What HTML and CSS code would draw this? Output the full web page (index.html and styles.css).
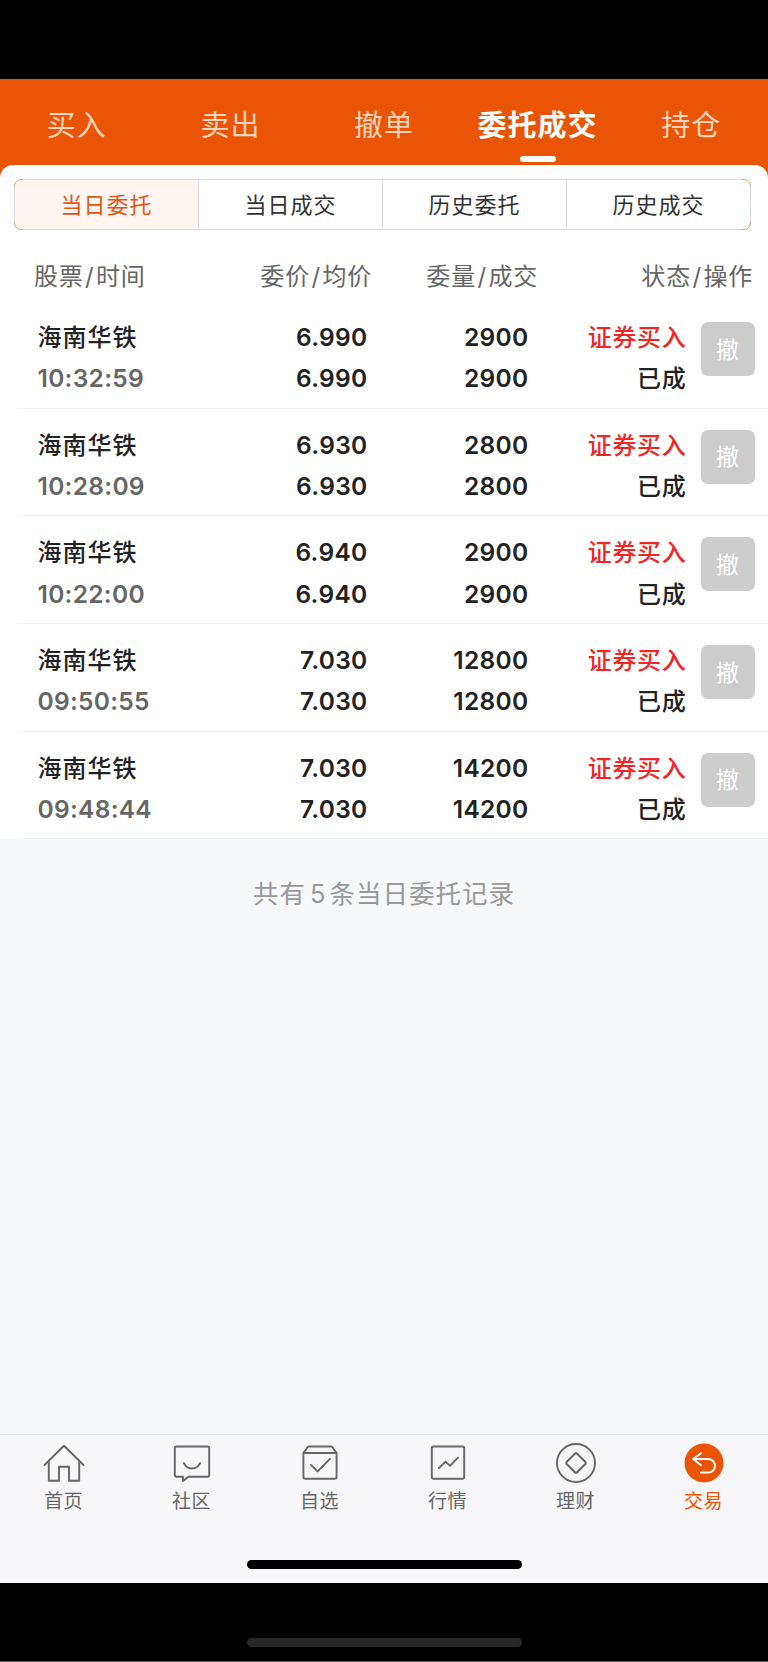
FILE: index.html
```
<!DOCTYPE html>
<html lang="zh-CN">
<head>
    <meta charset="UTF-8">
    <meta name="viewport" content="width=device-width, initial-scale=1.0">
    <title>委托成交</title>
    <link rel="stylesheet" href="styles.css">
</head>
<body>

    <header class="top-nav">
        <a class="top-link">买入</a>
        <a class="top-link">卖出</a>
        <a class="top-link">撤单</a>
        <a class="top-link active">委托成交</a>
        <a class="top-link">持仓</a>
    </header>

    <main class="content">
        <section class="sheet">
            <div class="tabs">
                <button class="tab selected">当日委托</button>
                <button class="tab">当日成交</button>
                <button class="tab">历史委托</button>
                <button class="tab">历史成交</button>
            </div>

            <div class="list-head">
                <span>股票<i>/</i>时间</span>
                <span>委价<i>/</i>均价</span>
                <span>委量<i>/</i>成交</span>
                <span>状态<i>/</i>操作</span>
            </div>

            <div class="row">
                <div class="stock"><p>海南华铁</p><p class="time">10:32:59</p></div>
                <div class="num"><p>6.990</p><p>6.990</p></div>
                <div class="num"><p>2900</p><p>2900</p></div>
                <div class="status"><p class="buy">证券买入</p><p>已成</p></div>
                <button class="cancel">撤</button>
            </div>
            <div class="row">
                <div class="stock"><p>海南华铁</p><p class="time">10:28:09</p></div>
                <div class="num"><p>6.930</p><p>6.930</p></div>
                <div class="num"><p>2800</p><p>2800</p></div>
                <div class="status"><p class="buy">证券买入</p><p>已成</p></div>
                <button class="cancel">撤</button>
            </div>
            <div class="row">
                <div class="stock"><p>海南华铁</p><p class="time">10:22:00</p></div>
                <div class="num"><p>6.940</p><p>6.940</p></div>
                <div class="num"><p>2900</p><p>2900</p></div>
                <div class="status"><p class="buy">证券买入</p><p>已成</p></div>
                <button class="cancel">撤</button>
            </div>
            <div class="row">
                <div class="stock"><p>海南华铁</p><p class="time">09:50:55</p></div>
                <div class="num"><p>7.030</p><p>7.030</p></div>
                <div class="num"><p>12800</p><p>12800</p></div>
                <div class="status"><p class="buy">证券买入</p><p>已成</p></div>
                <button class="cancel">撤</button>
            </div>
            <div class="row">
                <div class="stock"><p>海南华铁</p><p class="time">09:48:44</p></div>
                <div class="num"><p>7.030</p><p>7.030</p></div>
                <div class="num"><p>14200</p><p>14200</p></div>
                <div class="status"><p class="buy">证券买入</p><p>已成</p></div>
                <button class="cancel">撤</button>
            </div>
        </section>

        <p class="summary">共有<span class="count">5</span>条当日委托记录</p>
    </main>

    <nav class="bottom-nav">
        <a class="nav-item">
            <svg class="icon" viewBox="0 0 42 42">
                <path d="M1.5 22 21 2.8 40.5 22M5.8 18.5V37.8H16V23.8H26V37.8H36.2V18.5"/>
            </svg>
            <span>首页</span>
        </a>
        <a class="nav-item">
            <svg class="icon" viewBox="0 0 42 42">
                <path d="M5.5 3.5H36.5Q38.2 3.5 38.2 5.2V32Q38.2 33.7 36.5 33.7H17.5L12 38V33.7H5.5Q3.8 33.7 3.8 32V5.2Q3.8 3.5 5.5 3.5Z"/>
                <path d="M13 20.2C16 27.2 26 27.2 29 20.2"/>
            </svg>
            <span>社区</span>
        </a>
        <a class="nav-item">
            <svg class="icon" viewBox="0 0 42 42">
                <path d="M4.4 10 9.2 3.5H32.8L37.6 10V33.8Q37.6 35.8 35.6 35.8H6.4Q4.4 35.8 4.4 33.8ZM4.4 10H37.6"/>
                <path d="M12 21.8 18.6 28.4 30.8 16"/>
            </svg>
            <span>自选</span>
        </a>
        <a class="nav-item">
            <svg class="icon" viewBox="0 0 42 42">
                <rect x="4.8" y="3.5" width="32.4" height="32.3" rx="1.8"/>
                <path d="M11.8 25.2 18.6 18.6 23 22.8 31 14.6"/>
            </svg>
            <span>行情</span>
        </a>
        <a class="nav-item">
            <svg class="icon" viewBox="0 0 42 42">
                <circle cx="21" cy="20" r="19"/>
                <path d="M21.9 10.5 30.4 19Q31.3 20 30.4 21L21.9 29.5Q21 30.4 20.1 29.5L11.6 21Q10.7 20 11.6 19L20.1 10.5Q21 9.6 21.9 10.5Z"/>
            </svg>
            <span>理财</span>
        </a>
        <a class="nav-item current">
            <svg class="icon" viewBox="0 0 42 42">
                <circle class="disc" cx="21" cy="20" r="19.5"/>
                <path class="arrow" d="M18 10.2 10.2 16 18 22.2M10.2 16H25.2A6.8 6.8 0 0 1 25.2 29.6H18"/>
            </svg>
            <span>交易</span>
        </a>
    </nav>

    <div class="home-area">
        <div class="home-bar"></div>
    </div>
    <footer class="device-area">
        <div class="home-bar"></div>
    </footer>

</body>
</html>
```
FILE: styles.css
```
* {
    margin: 0;
    padding: 0;
    box-sizing: border-box;
}

body {
    display: flex;
    flex-direction: column;
    height: 1662px;
    padding-top: 79px;
    background-color: #000;
    color: #222;
    font-family: "Inter", "Noto Sans CJK SC", sans-serif;
    letter-spacing: 1px;
    overflow: hidden;
}

button {
    border: none;
    font-family: inherit;
    letter-spacing: inherit;
}

/* Top navigation */
.top-nav {
    display: flex;
    flex: none;
    height: 86px;
    background-color: #e95504;
}

.top-link {
    flex: 1;
    display: flex;
    flex-direction: column;
    align-items: center;
    padding-top: 25px;
    font-size: 29px;
    line-height: 44px;
    color: #fbd3bd;
    white-space: nowrap;
}

.top-link.active {
    font-weight: 600;
    color: #fff;
}

.top-link.active::after {
    content: "";
    width: 36px;
    height: 6px;
    margin-top: 8px;
    border-radius: 3px;
    background-color: #fff;
}

.content {
    flex: none;
    height: 1269px;
    background: linear-gradient(#e95504 30px, #f6f8fa 30px);
}

.sheet {
    padding-top: 14px;
    border-radius: 13px 13px 0 0;
    background-color: #fff;
}

/* Segmented tabs */
.tabs {
    position: relative;
    display: flex;
    height: 51px;
    margin: 0 17px 0 14px;
    border: 1px solid #d9dce2;
    border-radius: 7px;
}

/* Orange outline, visible only in the rounded corners */
.tabs::after {
    content: "";
    position: absolute;
    inset: -1px;
    border: 1px solid #e39a78;
    border-radius: 7px;
    pointer-events: none;
    -webkit-mask: linear-gradient(#000 0 0) 0 0 / 9px 8px no-repeat,
        linear-gradient(#000 0 0) 100% 0 / 9px 8px no-repeat,
        linear-gradient(#000 0 0) 0 100% / 9px 8px no-repeat,
        linear-gradient(#000 0 0) 100% 100% / 9px 8px no-repeat;
}

.tab {
    flex: 1;
    border-left: 1px solid #d9dce2;
    background-color: #fff;
    color: #333;
    font-size: 22px;
    line-height: 48px;
}

.tab.selected {
    border-left: none;
    border-radius: 6px 0 0 6px;
    background-color: #fff6f2;
    color: #e0561a;
}

.tab:last-child {
    border-radius: 0 6px 6px 0;
}

/* Order list */
.list-head,
.row {
    display: grid;
}

.list-head {
    grid-template-columns: 180px 158px 166px 215px;
    height: 71px;
    padding-left: 34px;
    font-size: 24px;
    letter-spacing: 0.8px;
    line-height: 93px;
    color: #666;
}

.list-head span + span {
    text-align: right;
}

.list-head i {
    margin: 0 1.5px;
    font-style: normal;
}

.row {
    grid-template-columns: 170px 160px 161px 158px 54px;
    height: 107.7px;
    margin-left: 17px;
    padding: 16px 0 0 20.5px;
    border-bottom: 1px solid #f2f3f5;
    font-size: 24px;
    font-weight: 500;
    line-height: 41.3px;
}

.time {
    color: #666;
}

.num,
.status {
    text-align: right;
}

.num,
.time {
    font-size: 24.5px;
    font-weight: 600;
    letter-spacing: 0.3px;
}

.status {
    letter-spacing: 0.7px;
}

.buy {
    color: #f02626;
}

.cancel {
    width: 54px;
    height: 54px;
    margin: 5px 0 0 14.5px;
    padding-bottom: 3px;
    border-radius: 7px;
    background-color: #ccc;
    color: #fff;
    font-size: 23px;
}

.summary {
    padding-top: 35px;
    font-size: 25.5px;
    line-height: 40px;
    text-align: center;
    color: #999;
}

.count {
    margin: 0 3px 0 4px;
}

/* Bottom navigation */
.bottom-nav {
    display: flex;
    flex: none;
    height: 90px;
    border-top: 1px solid #e2e4e8;
    background-color: #f7f7fa;
}

.nav-item {
    flex: 1;
    display: flex;
    flex-direction: column;
    align-items: center;
    padding: 8px 1px 0 0;
    color: #666;
    font-size: 19px;
    letter-spacing: 0.5px;
    line-height: 34px;
}

.icon {
    flex: none;
    width: 42px;
    height: 42px;
    fill: none;
    stroke: currentColor;
    stroke-width: 1.9;
    stroke-linejoin: round;
    stroke-linecap: round;
}

.nav-item.current {
    color: #e95504;
}

.disc {
    fill: #e95504;
    stroke: none;
}

.arrow {
    stroke: #fff;
    stroke-width: 2;
}

/* Home indicators */
.home-area {
    flex: none;
    height: 59px;
    padding-top: 36px;
    background-color: #f7f7fa;
}

.home-bar {
    width: 275px;
    height: 9px;
    margin: 0 auto;
    border-radius: 5px;
    background-color: #000;
}

.device-area {
    flex: 1;
    padding-top: 55px;
    border-bottom: 1px solid #555;
}

.device-area .home-bar {
    background-color: #282828;
}
```
